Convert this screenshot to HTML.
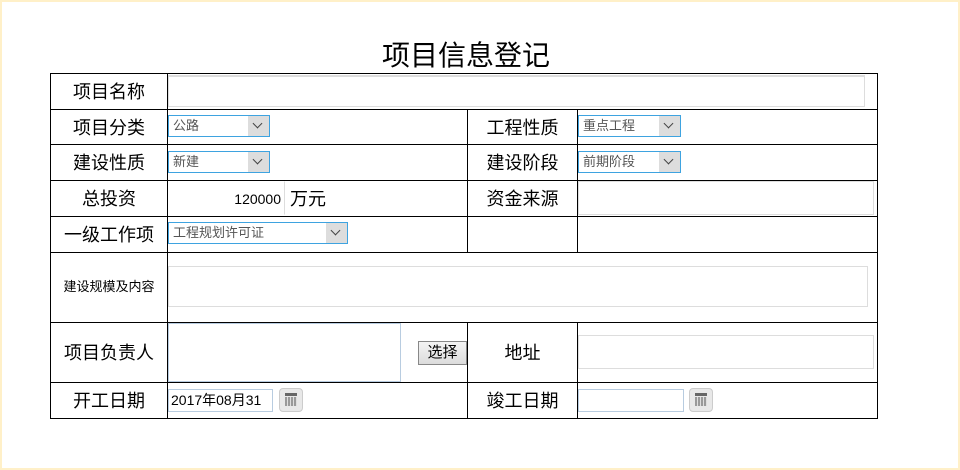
<!DOCTYPE html>
<html><head><meta charset="utf-8"><style>
*{margin:0;padding:0;box-sizing:border-box}
body{width:960px;height:470px;background:#fff;position:relative;overflow:hidden;font-family:"Liberation Sans","Noto Sans CJK SC",sans-serif;color:#000}
.frame{position:absolute;left:0;top:0;width:960px;height:470px;border:2px solid #fff0c8}
.h{position:absolute;height:1px;background:#000}
.v{position:absolute;width:1px;background:#000}
.lbl{position:absolute;font-size:18px;text-align:center;line-height:20px}
.sel{position:absolute;height:22px;border:1px solid #3ea3e0;background:#fff;font-size:13px;color:#555;padding-left:4px;line-height:19px}
.sel .ar{position:absolute;right:0;top:0;width:21px;height:20px;background:#ddd}
.sel .ar:after{content:"";position:absolute;left:6px;top:4px;width:6px;height:6px;border-right:1px solid #444;border-bottom:1px solid #444;transform:rotate(45deg)}
.inp{position:absolute;border:1px solid #ddd;background:#fff}
.cal{position:absolute;width:24px;height:24px;border-radius:4px;background:#e8e8e8;border:1px solid #ccc}
.cal:before{content:"";position:absolute;left:5px;top:4px;width:12px;height:3px;background:#666}
.cal:after{content:"";position:absolute;left:5px;top:8px;width:12px;height:9px;background:repeating-linear-gradient(90deg,#999 0 2px,#ddd 2px 3px)}
</style></head><body>
<div class="frame"></div>
<div style="position:absolute;left:382px;top:38px;font-size:28px;line-height:36px">项目信息登记</div>

<div class="h" style="left:50px;width:828px;top:73px"></div>
<div class="h" style="left:50px;width:828px;top:109px"></div>
<div class="h" style="left:50px;width:828px;top:144px"></div>
<div class="h" style="left:50px;width:828px;top:180px"></div>
<div class="h" style="left:50px;width:828px;top:216px"></div>
<div class="h" style="left:50px;width:828px;top:252px"></div>
<div class="h" style="left:50px;width:828px;top:322px"></div>
<div class="h" style="left:50px;width:828px;top:382px"></div>
<div class="h" style="left:50px;width:828px;top:418px"></div>
<div class="v" style="left:50px;top:73px;height:346px"></div>
<div class="v" style="left:167px;top:73px;height:346px"></div>
<div class="v" style="left:877px;top:73px;height:346px"></div>
<div class="v" style="left:467px;top:109px;height:143px"></div>
<div class="v" style="left:577px;top:109px;height:143px"></div>
<div class="v" style="left:467px;top:322px;height:97px"></div>
<div class="v" style="left:577px;top:322px;height:97px"></div>

<div class="lbl" style="left:51px;width:116px;top:82px">项目名称</div>
<div class="lbl" style="left:51px;width:116px;top:118px">项目分类</div>
<div class="lbl" style="left:51px;width:116px;top:153px">建设性质</div>
<div class="lbl" style="left:51px;width:116px;top:189px">总投资</div>
<div class="lbl" style="left:51px;width:116px;top:225px">一级工作项</div>
<div class="lbl" style="left:51px;width:116px;top:277px;font-size:13px">建设规模及内容</div>
<div class="lbl" style="left:51px;width:116px;top:343px">项目负责人</div>
<div class="lbl" style="left:51px;width:116px;top:391px">开工日期</div>
<div class="lbl" style="left:468px;width:109px;top:118px">工程性质</div>
<div class="lbl" style="left:468px;width:109px;top:153px">建设阶段</div>
<div class="lbl" style="left:468px;width:109px;top:189px">资金来源</div>
<div class="lbl" style="left:468px;width:109px;top:343px">地址</div>
<div class="lbl" style="left:468px;width:109px;top:391px">竣工日期</div>

<div class="inp" style="left:168px;top:75px;width:697px;height:32px;border-top:2px solid #ddd"></div>
<div class="sel" style="left:168px;top:115px;width:102px">公路<span class="ar"></span></div>
<div class="sel" style="left:168px;top:151px;width:102px">新建<span class="ar"></span></div>
<div class="sel" style="left:578px;top:115px;width:103px">重点工程<span class="ar"></span></div>
<div class="sel" style="left:578px;top:151px;width:103px">前期阶段<span class="ar"></span></div>
<div class="sel" style="left:168px;top:222px;width:180px">工程规划许可证<span class="ar"></span></div>
<div class="inp" style="left:168px;top:181px;width:117px;height:34px;border-color:#fff #ddd #fff #fff;text-align:right;font-size:14px;line-height:34px;padding-right:3px">120000</div>
<div style="position:absolute;left:290px;top:189px;font-size:18px;line-height:20px">万元</div>
<div class="inp" style="left:578px;top:181px;width:296px;height:34px"></div>
<div class="inp" style="left:168px;top:266px;width:700px;height:41px"></div>
<div class="inp" style="left:168px;top:323px;width:233px;height:59px;border-color:#b8cce0"></div>
<div style="position:absolute;left:418px;top:341px;width:49px;height:24px;border:1px solid #888;background:linear-gradient(#f4f4f4,#dcdcdc);font-size:15px;text-align:center;line-height:22px">选择</div>
<div class="inp" style="left:578px;top:335px;width:296px;height:34px"></div>
<div class="inp" style="left:168px;top:389px;width:105px;height:23px;border-color:#b8cce0;font-size:14px;line-height:21px;padding-left:2px">2017年08月31</div>
<div class="cal" style="left:279px;top:388px"></div>
<div class="inp" style="left:578px;top:389px;width:106px;height:23px;border-color:#b8cce0"></div>
<div class="cal" style="left:689px;top:388px"></div>
</body></html>
